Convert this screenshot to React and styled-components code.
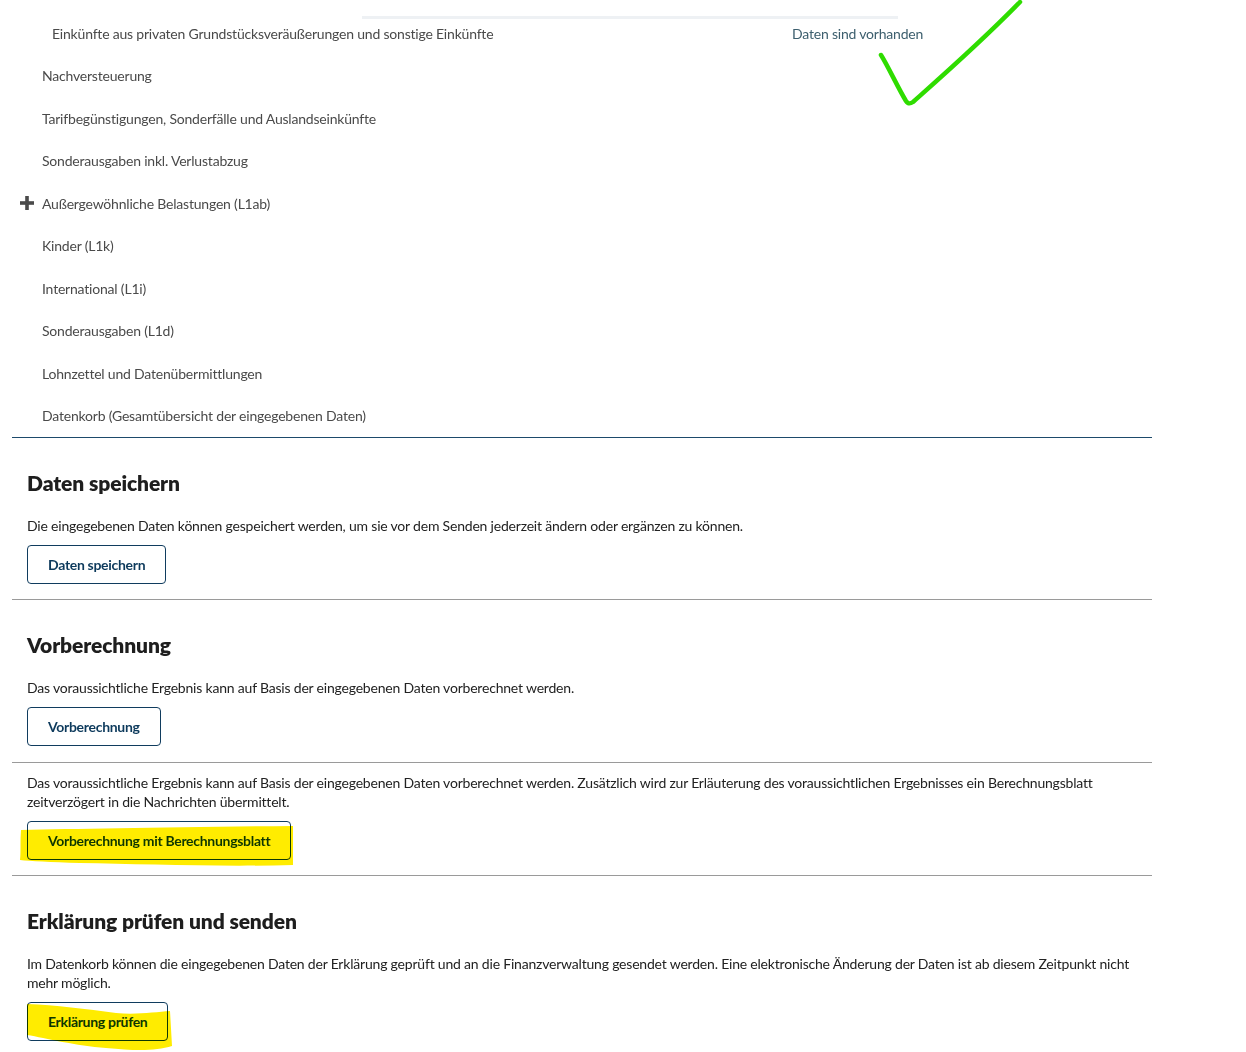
import React from "react";
import styled, { createGlobalStyle } from "styled-components";

const GlobalStyle = createGlobalStyle`
	body {
		margin: 0;
		background: #fff;
		font-family: Lato, "Noto Sans", sans-serif;
		color: #222;
	}
`;

const Page = styled.div`
	position: relative;
	width: 1140px;
	margin-left: 12px;
	padding-top: 12px;
`;

const NavList = styled.ul`
	list-style: none;
	margin: 0;
	padding: 0;
	border-bottom: 1px solid #1d4a6b;
`;

const NavRow = styled.li`
	position: relative;
	display: grid;
	grid-template-columns: 30px 750px 1fr;
	align-items: center;
	height: 42.5px;
	font-size: 14px;
	letter-spacing: -0.2px;
	color: #4a4a4a;

	${(p) =>
		p.$sub &&
		`
		&::before {
			content: "";
			position: absolute;
			left: 350px;
			top: 4px;
			width: 536px;
			height: 3px;
			background: #eef1f4;
		}
	`}
`;

const IconCell = styled.span`
	display: flex;
	align-items: center;
	padding-left: 8px;
	color: #4a4a4a;
`;

const RowLabel = styled.span`
	padding-left: ${(p) => (p.$sub ? "10px" : "0")};
`;

const Status = styled.span`
	color: #3d5f6e;
`;

const Section = styled.section`
	padding: ${(p) => p.$pad || "32px 15px 15px"};
	border-bottom: ${(p) => (p.$last ? "none" : "1px solid #9a9a9a")};
`;

const Heading = styled.h2`
	margin: 0 0 20px;
	font-size: 21px;
	line-height: 26px;
	font-weight: 800;
	letter-spacing: -0.1px;
	color: #1e1e1e;
`;

const Text = styled.p`
	margin: 0 0 10px;
	font-size: 14px;
	line-height: 19px;
	letter-spacing: -0.2px;
	color: #222;
`;

const ButtonWrap = styled.div`
	position: relative;
	display: inline-block;
`;

const Button = styled.button`
	height: 39px;
	padding: 0 20px;
	background: #fff;
	border: 1px solid #103c5e;
	border-radius: 4px;
	font-family: Lato, "Noto Sans", sans-serif;
	font-size: 14px;
	font-weight: 700;
	letter-spacing: -0.3px;
	color: #0d3a5c;
	cursor: pointer;
`;

const Marker = styled.svg`
	position: absolute;
	pointer-events: none;
	mix-blend-mode: multiply;
`;

const Check = styled.svg`
	position: absolute;
	left: 848px;
	top: -12px;
	pointer-events: none;
`;

const PlusIcon = () => (
	<svg width="14" height="14" viewBox="0 0 14 14">
		<rect x="5.2" y="0" width="3.6" height="14" fill="#4a4a4a" />
		<rect x="0" y="5.2" width="14" height="3.6" fill="#4a4a4a" />
	</svg>
);

const rows = [
	{ label: "Nachversteuerung" },
	{ label: "Tarifbegünstigungen, Sonderfälle und Auslandseinkünfte" },
	{ label: "Sonderausgaben inkl. Verlustabzug" },
	{ label: "Außergewöhnliche Belastungen (L1ab)", plus: true },
	{ label: "Kinder (L1k)" },
	{ label: "International (L1i)" },
	{ label: "Sonderausgaben (L1d)" },
	{ label: "Lohnzettel und Datenübermittlungen" },
	{ label: "Datenkorb (Gesamtübersicht der eingegebenen Daten)" },
];

export default function App() {
	return (
		<Page>
			<GlobalStyle />
			<NavList>
				<NavRow $sub>
					<IconCell />
					<RowLabel $sub>Einkünfte aus privaten Grundstücksveräußerungen und sonstige Einkünfte</RowLabel>
					<Status>Daten sind vorhanden</Status>
				</NavRow>
				{rows.map((r) => (
					<NavRow key={r.label}>
						<IconCell>{r.plus && <PlusIcon />}</IconCell>
						<RowLabel>{r.label}</RowLabel>
						<span />
					</NavRow>
				))}
			</NavList>

			<Section>
				<Heading>Daten speichern</Heading>
				<Text>
					Die eingegebenen Daten können gespeichert werden, um sie vor dem Senden jederzeit ändern oder ergänzen zu können.
				</Text>
				<Button>Daten speichern</Button>
			</Section>

			<Section $pad="32px 15px 16px">
				<Heading>Vorberechnung</Heading>
				<Text>Das voraussichtliche Ergebnis kann auf Basis der eingegebenen Daten vorberechnet werden.</Text>
				<Button>Vorberechnung</Button>
			</Section>

			<Section $pad="10px 15px 15px">
				<Text>
					Das voraussichtliche Ergebnis kann auf Basis der eingegebenen Daten vorberechnet werden. Zusätzlich wird zur Erläuterung des voraussichtlichen Ergebnisses ein Berechnungsblatt
					<br />
					zeitverzögert in die Nachrichten übermittelt.
				</Text>
				<ButtonWrap>
					<Button>Vorberechnung mit Berechnungsblatt</Button>
					<Marker width="280" height="44" viewBox="0 0 280 44" style={{ left: -7, top: 5 }}>
						<path
							d="M1 4 C 60 3, 150 1, 273 0 L 273 39 C 200 41, 120 38, 60 37 C 30 36, 10 35, 0 34 C 1 25, 0 14, 1 4 Z"
							fill="#ffec00"
						/>
					</Marker>
				</ButtonWrap>
			</Section>

			<Section $pad="32px 15px 11px" $last>
				<Heading>Erklärung prüfen und senden</Heading>
				<Text>
					Im Datenkorb können die eingegebenen Daten der Erklärung geprüft und an die Finanzverwaltung gesendet werden. Eine elektronische Änderung der Daten ist ab diesem Zeitpunkt nicht
					<br />
					mehr möglich.
				</Text>
				<ButtonWrap>
					<Button>Erklärung prüfen</Button>
					<Marker width="150" height="52" viewBox="0 0 150 52" style={{ left: -1, top: 0 }}>
						<path
							d="M1 2 C 30 3, 60 7, 90 11 C 110 13, 130 10, 144 9 L 146 44 C 130 49, 110 49, 80 46 C 50 44, 20 36, 1 33 Z"
							fill="#ffec00"
						/>
					</Marker>
				</ButtonWrap>
			</Section>

			<Check width="170" height="125" viewBox="0 0 170 125">
				<path
					d="M21 67 C 28 78, 38 100, 46 113 C 48 116, 50 116, 53 114 C 80 90, 120 55, 160 14"
					fill="none"
					stroke="#2fdc00"
					strokeWidth="4.5"
					strokeLinecap="round"
					strokeLinejoin="round"
				/>
			</Check>
		</Page>
	);
}
